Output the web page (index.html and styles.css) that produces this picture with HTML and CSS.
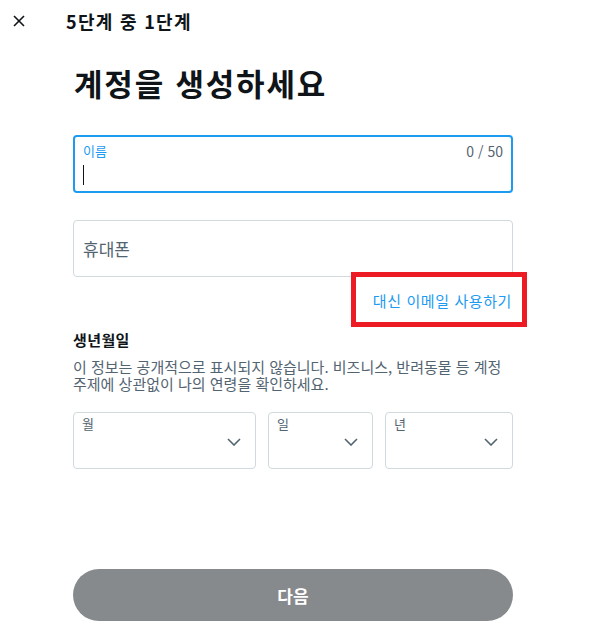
FILE: index.html
```html
<!DOCTYPE html>
<html lang="ko">
<head>
    <meta charset="UTF-8">
    <meta name="viewport" content="width=device-width, initial-scale=1.0">
    <title>계정 생성</title>
    <link rel="stylesheet" href="styles.css">
</head>
<body>
    <div class="signup">
        <div class="signup-header">
            <button class="close-button" aria-label="닫기">
                <svg width="12" height="12" viewBox="0 0 12 12" fill="none" stroke="currentColor" stroke-width="1.6">
                    <line x1="1" y1="1" x2="11" y2="11"></line>
                    <line x1="11" y1="1" x2="1" y2="11"></line>
                </svg>
            </button>
            <div class="step">5단계 중 1단계</div>
        </div>

        <div class="signup-body">
            <h1>계정을 생성하세요</h1>

            <label class="field field-focused">
                <div class="field-top">
                    <span class="field-label">이름</span>
                    <span class="field-count">0 / 50</span>
                </div>
                <span class="caret"></span>
            </label>

            <label class="field field-phone">
                <span class="field-placeholder">휴대폰</span>
            </label>

            <div class="switch-row">
                <a class="switch-link" href="#">대신 이메일 사용하기</a>
                <span class="highlight-box"></span>
            </div>

            <div class="birth-title">생년월일</div>
            <p class="birth-note">이 정보는 공개적으로 표시되지 않습니다. 비즈니스, 반려동물 등 계정 주제에 상관없이 나의 연령을 확인하세요.</p>

            <div class="birth-grid">
                <div class="select">
                    <span class="select-label">월</span>
                    <svg class="chevron" width="14" height="8" viewBox="0 0 14 8" fill="none" stroke="currentColor" stroke-width="1.6">
                        <polyline points="1,1 7,7 13,1"></polyline>
                    </svg>
                </div>
                <div class="select">
                    <span class="select-label">일</span>
                    <svg class="chevron" width="14" height="8" viewBox="0 0 14 8" fill="none" stroke="currentColor" stroke-width="1.6">
                        <polyline points="1,1 7,7 13,1"></polyline>
                    </svg>
                </div>
                <div class="select">
                    <span class="select-label">년</span>
                    <svg class="chevron" width="14" height="8" viewBox="0 0 14 8" fill="none" stroke="currentColor" stroke-width="1.6">
                        <polyline points="1,1 7,7 13,1"></polyline>
                    </svg>
                </div>
            </div>

            <button class="next-button" disabled>다음</button>
        </div>
    </div>
</body>
</html>
```

FILE: styles.css
```css
* {
    margin: 0;
    padding: 0;
    box-sizing: border-box;
}

body {
    font-family: "Noto Sans CJK KR", "Noto Sans", sans-serif;
    background: white;
    color: #0f1419;
}

.signup {
    width: 591px;
    height: 641px;
}

.signup-header {
    display: flex;
    align-items: center;
    height: 42px;
    padding-left: 13px;
}

.close-button {
    background: none;
    border: none;
    color: #0f1419;
    width: 12px;
    height: 12px;
    display: flex;
}

.step {
    margin-left: 41px;
    font-size: 18px;
    font-weight: bold;
    letter-spacing: 1.3px;
}

.signup-body {
    padding: 0 78px 0 73px;
}

h1 {
    font-size: 31px;
    font-weight: bold;
    letter-spacing: 1.8px;
    margin: 19px 0 30px 1px;
    line-height: 44px;
}

.field {
    display: block;
    height: 58px;
    border: 1px solid #cfd9de;
    border-radius: 4px;
    padding: 0 9px;
}

.field-focused {
    border: 2px solid #1d9bf0;
    padding: 0 8px;
}

.field-top {
    display: flex;
    justify-content: space-between;
    padding-top: 5px;
    font-size: 13px;
    line-height: 18px;
}

.field-label {
    color: #1d9bf0;
}

.field-count {
    color: #536471;
    font-size: 14px;
}

.caret {
    display: block;
    width: 1px;
    height: 20px;
    margin-top: 5px;
    background: #0f1419;
}

.field-phone {
    margin-top: 27px;
    display: flex;
    align-items: center;
    height: 57px;
}

.field-placeholder {
    font-size: 17px;
    color: #536471;
}

.switch-row {
    position: relative;
    display: flex;
    justify-content: flex-end;
    padding: 14px 1px 0 0;
    height: 53px;
}

.switch-link {
    color: #1d9bf0;
    font-size: 15px;
    letter-spacing: 0.6px;
    text-decoration: none;
    line-height: 20px;
}

.highlight-box {
    position: absolute;
    left: 278px;
    top: -5px;
    width: 176px;
    height: 55px;
    border: 5px solid #ed1c24;
}

.birth-title {
    font-size: 15px;
    font-weight: bold;
    letter-spacing: 0.4px;
    line-height: 20px;
}

.birth-note {
    margin-top: 8px;
    font-size: 15px;
    line-height: 17px;
    color: #536471;
}

.birth-grid {
    display: grid;
    grid-template-columns: 183px 105px 1fr;
    gap: 12px;
    margin-top: 20px;
}

.select {
    position: relative;
    height: 57px;
    border: 1px solid #cfd9de;
    border-radius: 4px;
    padding: 3px 8px;
}

.select-label {
    display: block;
    font-size: 13px;
    line-height: 16px;
    color: #536471;
}

.chevron {
    position: absolute;
    right: 14px;
    top: 25px;
    color: #536471;
}

.next-button {
    display: block;
    width: 100%;
    height: 52px;
    margin-top: 100px;
    border: none;
    border-radius: 26px;
    background: #878a8c;
    color: white;
    font-family: inherit;
    font-size: 17px;
    font-weight: bold;
}
```
